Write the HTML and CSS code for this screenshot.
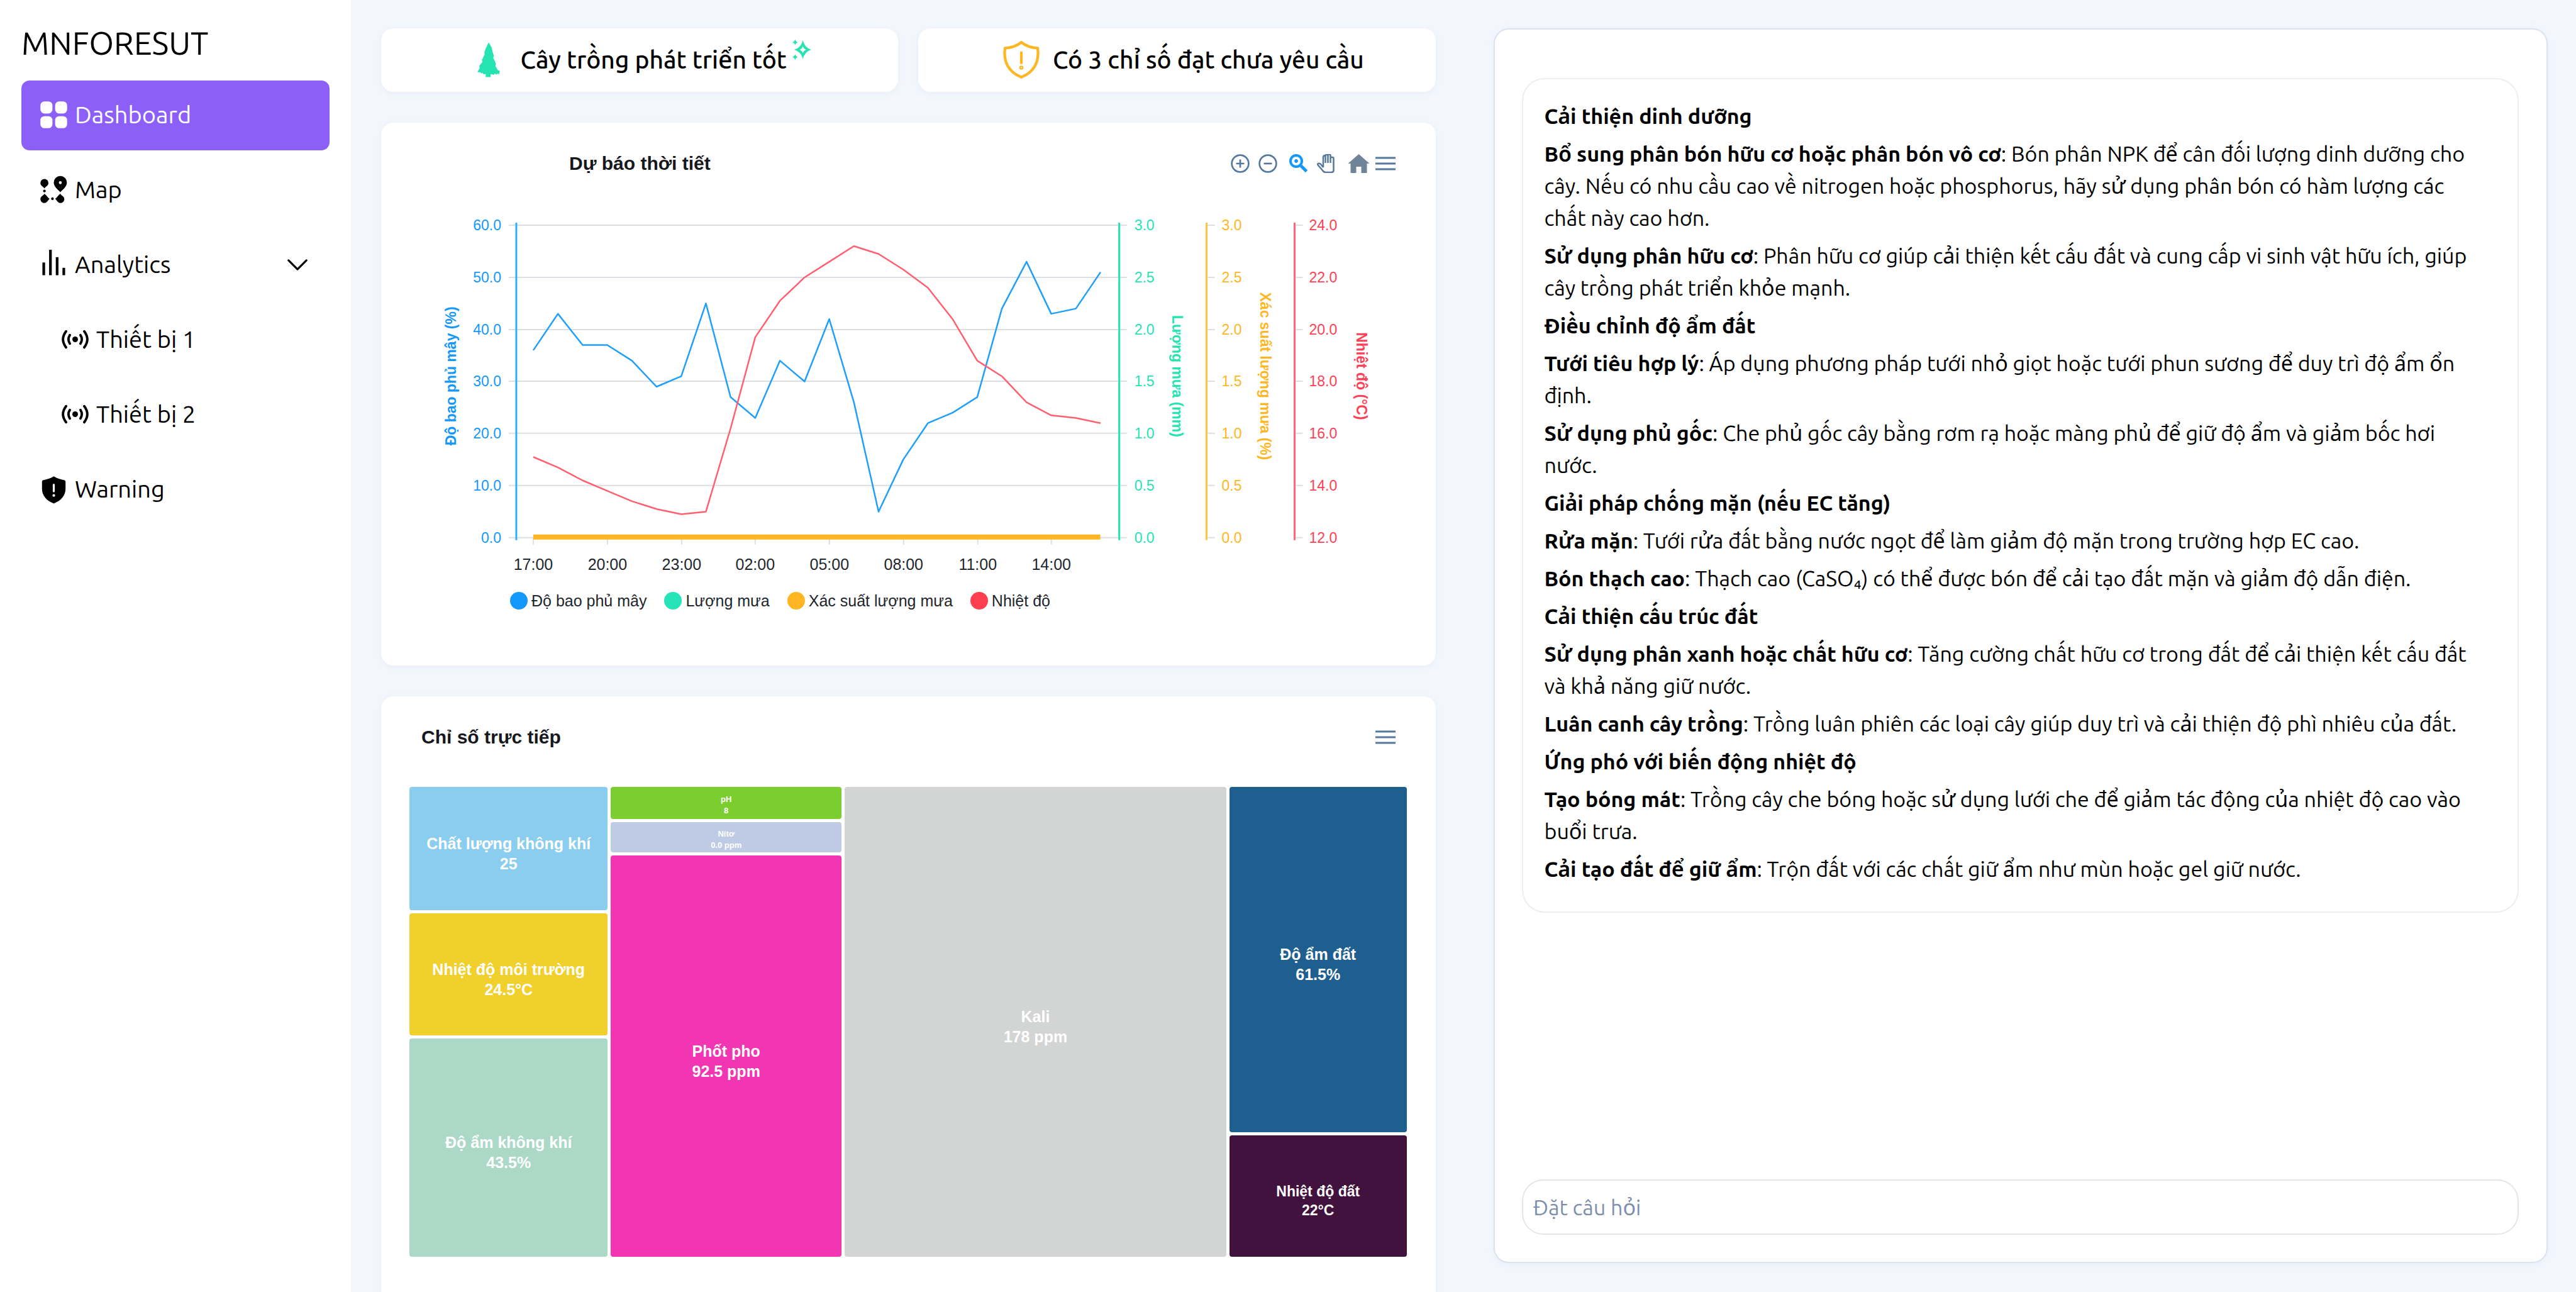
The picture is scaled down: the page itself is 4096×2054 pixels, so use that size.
FILE: index.html
```html
<!DOCTYPE html>
<html lang="vi">
<head>
<meta charset="utf-8">
<title>MNFORESUT</title>
<link rel="stylesheet" href="styles.css">
</head>
<body>
<div class="app">
  <aside class="sidebar">
    <h1 class="brand">MNFORESUT</h1>
    <nav class="nav">
      <a class="nav-item active" href="#dashboard">
        <svg class="icon" viewBox="0 0 24 24" fill="currentColor"><rect x="2" y="2" width="9" height="9" rx="3"/><rect x="13" y="2" width="9" height="9" rx="3"/><rect x="2" y="13" width="9" height="9" rx="3"/><rect x="13" y="13" width="9" height="9" rx="3"/></svg>
        Dashboard
      </a>
      <a class="nav-item" href="#map">
        <svg class="icon" viewBox="0 0 24 24" fill="currentColor">
          <path fill-rule="evenodd" d="M16.9 1.8a4.9 4.9 0 0 0-4.9 4.9c0 3.2 3 5 4.9 7.2 1.900-2.200 4.900-4 4.900-7.200a4.900 4.900 0 0 0-4.900-4.900zm0 3.900a1.100 1.100 0 1 1 0 2.200 1.100 1.100 0 0 1 0-2.200z"/>
          <path d="M5 4a3 3 0 0 0-3 3c0 2 2 2.500 3 4 1-1.500 3-2 3-4a3 3 0 0 0-3-3z"/>
          <circle cx="5" cy="13" r="1"/><circle cx="11" cy="18.800" r="1"/>
          <path d="M5 15c-1 1.600-3 2-3 4a3 3 0 0 0 3 3c2 0 2.400-2 3.900-3.200C7.400 18 7 16.500 5 15z"/>
          <path d="M16.900 15c1 1.600 3 2 3 4a3 3 0 0 1-3 3c-2 0-2.400-2-3.900-3.200 1.500-.8 1.900-2.300 3.900-3.800z"/>
        </svg>
        Map
      </a>
      <a class="nav-item" href="#analytics">
        <svg class="icon" viewBox="0 0 24 24" fill="currentColor"><rect x="3.500" y="10.500" width="2" height="9.500"/><rect x="8.500" y="1" width="2" height="19"/><rect x="13.500" y="6.500" width="2" height="13.500"/><rect x="18.500" y="14.500" width="2" height="5.500"/></svg>
        Analytics
        <svg class="chevron" viewBox="0 0 24 24" fill="none" stroke="currentColor" stroke-width="2" stroke-linecap="round" stroke-linejoin="round"><path d="M3 7.500l9 9 9-9"/></svg>
      </a>
      <a class="nav-item sub" href="#device-1">
        <svg class="icon" viewBox="0 0 24 24" fill="none" stroke="currentColor" stroke-width="1.800" stroke-linecap="round"><circle cx="12" cy="12" r="2.100" fill="currentColor" stroke="none"/><path d="M8 8.800q-2 3.200 0 6.400M16 8.800q2 3.200 0 6.400M5.200 6q-4.600 6 0 12M18.800 6q4.600 6 0 12"/></svg>
        Thiết bị 1
      </a>
      <a class="nav-item sub" href="#device-2">
        <svg class="icon" viewBox="0 0 24 24" fill="none" stroke="currentColor" stroke-width="1.800" stroke-linecap="round"><circle cx="12" cy="12" r="2.100" fill="currentColor" stroke="none"/><path d="M8 8.800q-2 3.200 0 6.400M16 8.800q2 3.200 0 6.400M5.200 6q-4.600 6 0 12M18.800 6q4.600 6 0 12"/></svg>
        Thiết bị 2
      </a>
      <a class="nav-item" href="#warning">
        <svg class="icon" viewBox="0 0 24 24"><path fill="currentColor" d="M12 2.500c2.500 1.600 5 2.300 7.800 2.800.7.200 1 .6 1 1.200v5.300c0 5-3.300 9-8.800 11-5.500-2-8.800-6-8.800-11V6.500c0-.6.300-1 1-1.200C7 4.800 9.500 4.100 12 2.500z"/><path d="M12 8.800v4.800" stroke="#fff" stroke-width="1.500" stroke-linecap="round"/><circle cx="12" cy="16.800" r="1" fill="#fff"/></svg>
        Warning
      </a>
    </nav>
  </aside>

  <main class="content">
    <div class="column">
      <div class="status-row">
        <section class="card status healthy">
          <svg class="status-icon" viewBox="-6 -4 36 42" fill="#26e4b2"><path d="M12 0l3 5 .5 3 1.600 5-.6 2 2.700 6-.6 2 2.300 4 2 1-.4 3-2-.4-.8 1-1.500-1-1.200 1.200L14 31v3h-5l.2-3-2.200.2-.8-1.400-1.400.8-.6-1.300L1 29l2.200-4-.4-2L6 19l-.6-2L8 12l-.2-2.300L9 6z"/></svg>
          <h2>Cây trồng phát triển tốt</h2>
          <svg class="sparkles" viewBox="0 0 30 30" fill="#26e4b2"><path fill-rule="evenodd" d="M16.500 1Q19 12 29 15 19 18 16.500 29 14 18 3.500 15 14 12 16.500 1zm0 8.500Q15.500 13.500 11.500 15 15.500 16.500 16.500 20.500 17.500 16.500 21.500 15 17.500 13.500 16.500 9.500z"/><path d="M5 0q1 3 4 4-3 1-4 4-1-3-4-4 3-1 4-4zM5 22q1 3 4 4-3 1-4 4-1-3-4-4 3-1 4-4z"/></svg>
        </section>
        <section class="card status">
          <svg class="status-icon" viewBox="0 0 24 24" fill="none" stroke="#ffb622" stroke-width="1.500" stroke-linejoin="round" stroke-linecap="round"><path d="M12 2.200Q8 5.400 2.800 5.400q-1.500 12 9.200 16.400Q22.700 17.400 21.200 5.400 16 5.400 12 2.200z"/><path d="M12 8v5.800"/><circle cx="12" cy="16.400" r=".4"/></svg>
          <h2>Có 3 chỉ số đạt chưa yêu cầu</h2>
        </section>
      </div>

      <section class="card forecast">
        <header class="card-head forecast-head">
          <h3>Dự báo thời tiết</h3>
          <div class="toolbar">
            <button type="button" aria-label="Phóng to"><svg class="tool" viewBox="0 0 28 28"><circle cx="14" cy="14" r="12.500"/><path d="M14 8v12M8 14h12"/></svg></button>
            <button type="button" aria-label="Thu nhỏ"><svg class="tool" viewBox="0 0 28 28"><circle cx="14" cy="14" r="12.500"/><path d="M8 14h12"/></svg></button>
            <button type="button" class="tool-gap" aria-label="Chọn vùng"><svg class="tool selected" viewBox="0 0 30 30"><circle cx="11" cy="11" r="9" stroke-width="4"/><path d="M18.500 18.500l9 9" stroke-width="5"/><path d="M11 8v6M8 11h6" stroke-width="3"/></svg></button>
            <button type="button" aria-label="Di chuyển"><svg class="tool" viewBox="0 0 30 30"><path d="M10 21V5q0-3 3.500-3V14M13.500 2q1-1.500 4-1.200V14M17.500 .8q3.500-.8 4 .8V14M21.500 5h3q2 0 2 2v19q0 3-4 3H14q-3 0-5-3l-6-7q-3-3-1-4t4 1l4 5"/></svg></button>
            <button type="button" class="tool-gap" aria-label="Đặt lại"><svg class="tool home" viewBox="0 0 34 30"><path d="M17 0l17 15h-4v15H21V20h-8v10H4V15H0z"/></svg></button>
            <button type="button" class="tool-menu" aria-label="Menu"><svg class="tool menu" viewBox="0 0 32 30"><path d="M0 6h32M0 15h32M0 24h32"/></svg></button>
          </div>
        </header>
        <svg class="plot" viewBox="0 0 1677 640">
          <g class="grid"><path d="M203 73H1186M203 156H1186M203 239H1186M203 321H1186M203 404H1186M203 487H1186M203 570H1186"/><path d="M1315 73h11M1315 156h11M1315 239h11M1315 321h11M1315 404h11M1315 487h11M1315 570h11M1455 73h11M1455 156h11M1455 239h11M1455 321h11M1455 404h11M1455 487h11M1455 570h11"/><path d="M242 570v11M360 570v11M478 570v11M595 570v11M713 570v11M831 570v11M949 570v11M1066 570v11"/></g>
          <g class="axes"><path stroke="#2bb0fb" d="M215 69V574"/><path stroke="#26e4b2" d="M1174 69V574"/><path stroke="#ffc23c" d="M1313 69V574"/><path stroke="#ff6478" d="M1453 69V574"/></g>
          <polyline class="line cloud" transform="translate(242 570) scale(39.230 -8.280)" points="0,36 1,43 2,37 3,37 4,34 5,29 6,31 7,45 8,27 9,23 10,34 11,30 12,42 13,26 14,5 15,15 16,22 17,24 18,27 19,44 20,53 21,43 22,44 23,51"/>
          <polyline class="line temp" transform="translate(242 570) scale(39.230 -41.400)" points="0,3.1 1,2.7 2,2.2 3,1.8 4,1.4 5,1.1 6,.9 7,1 8,4.2 9,7.7 10,9.1 11,10 12,10.6 13,11.2 14,10.9 15,10.3 16,9.6 17,8.4 18,6.8 19,6.2 20,5.2 21,4.7 22,4.6 23,4.4"/>
          <path d="M242 569H1144" stroke="#ffb622" stroke-width="8"/>
          <g class="ticks cloud-text end"><text x="191" y="81">60.0</text><text x="191" y="164">50.0</text><text x="191" y="247">40.0</text><text x="191" y="329">30.0</text><text x="191" y="412">20.0</text><text x="191" y="495">10.0</text><text x="191" y="578">0.0</text></g>
          <g class="ticks rain-text"><text x="1198" y="81">3.0</text><text x="1198" y="164">2.5</text><text x="1198" y="247">2.0</text><text x="1198" y="329">1.5</text><text x="1198" y="412">1.0</text><text x="1198" y="495">0.5</text><text x="1198" y="578">0.0</text></g>
          <g class="ticks prob-text"><text x="1337" y="81">3.0</text><text x="1337" y="164">2.5</text><text x="1337" y="247">2.0</text><text x="1337" y="329">1.5</text><text x="1337" y="412">1.0</text><text x="1337" y="495">0.5</text><text x="1337" y="578">0.0</text></g>
          <g class="ticks temp-text"><text x="1476" y="81">24.0</text><text x="1476" y="164">22.0</text><text x="1476" y="247">20.0</text><text x="1476" y="329">18.0</text><text x="1476" y="412">16.0</text><text x="1476" y="495">14.0</text><text x="1476" y="578">12.0</text></g>
          <g class="hours"><text x="242" y="621">17:00</text><text x="360" y="621">20:00</text><text x="478" y="621">23:00</text><text x="595" y="621">02:00</text><text x="713" y="621">05:00</text><text x="831" y="621">08:00</text><text x="949" y="621">11:00</text><text x="1066" y="621">14:00</text></g>
          <g class="axis-title">
            <text class="cloud-text" transform="translate(119 313) rotate(-90)">Độ bao phủ mây (%)</text>
            <text class="rain-text" transform="translate(1258 313) rotate(90)">Lượng mưa (mm)</text>
            <text class="prob-text" transform="translate(1398 313) rotate(90)">Xác suất lượng mưa (%)</text>
            <text class="temp-text" transform="translate(1551 313) rotate(90)">Nhiệt độ (°C)</text>
          </g>
        </svg>
        <ul class="legend">
          <li class="key-cloud">Độ bao phủ mây</li>
          <li class="key-rain">Lượng mưa</li>
          <li class="key-prob">Xác suất lượng mưa</li>
          <li class="key-temp">Nhiệt độ</li>
        </ul>
      </section>

      <section class="card live">
        <header class="card-head">
          <h3>Chỉ số trực tiếp</h3>
          <div class="toolbar"><button type="button" aria-label="Menu"><svg class="tool menu" viewBox="0 0 32 30"><path d="M0 6h32M0 15h32M0 24h32"/></svg></button></div>
        </header>
        <div class="treemap" style="grid-template-columns:316fr 367fr 608fr 282fr">
          <div class="tree-col" style="grid-template-rows:197fr 194fr 348fr">
            <div class="tile air">Chất lượng không khí<br>25</div>
            <div class="tile env">Nhiệt độ môi trường<br>24.5°C</div>
            <div class="tile humid">Độ ẩm không khí<br>43.5%</div>
          </div>
          <div class="tree-col" style="grid-template-rows:51fr 48fr 640fr">
            <div class="tile tiny ph">pH<br>8</div>
            <div class="tile tiny nitro">Nitơ<br>0.0 ppm</div>
            <div class="tile phos">Phốt pho<br>92.5 ppm</div>
          </div>
          <div class="tree-col">
            <div class="tile kali">Kali<br>178 ppm</div>
          </div>
          <div class="tree-col" style="grid-template-rows:549fr 193fr">
            <div class="tile soil">Độ ẩm đất<br>61.5%</div>
            <div class="tile small soil-temp">Nhiệt độ đất<br>22°C</div>
          </div>
        </div>
      </section>
    </div>

    <section class="assistant">
      <div class="answer">
        <p><b>Cải thiện dinh dưỡng</b></p>
        <p><b>Bổ sung phân bón hữu cơ hoặc phân bón vô cơ</b>: Bón phân NPK để cân đối lượng dinh dưỡng cho cây. Nếu có nhu cầu cao về nitrogen hoặc phosphorus, hãy sử dụng phân bón có hàm lượng các chất này cao hơn.</p>
        <p><b>Sử dụng phân hữu cơ</b>: Phân hữu cơ giúp cải thiện kết cấu đất và cung cấp vi sinh vật hữu ích, giúp cây trồng phát triển khỏe mạnh.</p>
        <p><b>Điều chỉnh độ ẩm đất</b></p>
        <p><b>Tưới tiêu hợp lý</b>: Áp dụng phương pháp tưới nhỏ giọt hoặc tưới phun sương để duy trì độ ẩm ổn định.</p>
        <p><b>Sử dụng phủ gốc</b>: Che phủ gốc cây bằng rơm rạ hoặc màng phủ để giữ độ ẩm và giảm bốc hơi nước.</p>
        <p><b>Giải pháp chống mặn (nếu EC tăng)</b></p>
        <p><b>Rửa mặn</b>: Tưới rửa đất bằng nước ngọt để làm giảm độ mặn trong trường hợp EC cao.</p>
        <p><b>Bón thạch cao</b>: Thạch cao (CaSO₄) có thể được bón để cải tạo đất mặn và giảm độ dẫn điện.</p>
        <p><b>Cải thiện cấu trúc đất</b></p>
        <p><b>Sử dụng phân xanh hoặc chất hữu cơ</b>: Tăng cường chất hữu cơ trong đất để cải thiện kết cấu đất và khả năng giữ nước.</p>
        <p><b>Luân canh cây trồng</b>: Trồng luân phiên các loại cây giúp duy trì và cải thiện độ phì nhiêu của đất.</p>
        <p><b>Ứng phó với biến động nhiệt độ</b></p>
        <p><b>Tạo bóng mát</b>: Trồng cây che bóng hoặc sử dụng lưới che để giảm tác động của nhiệt độ cao vào buổi trưa.</p>
        <p><b>Cải tạo đất để giữ ẩm</b>: Trộn đất với các chất giữ ẩm như mùn hoặc gel giữ nước.</p>
      </div>
      <input class="question" type="text" placeholder="Đặt câu hỏi" aria-label="Đặt câu hỏi">
    </section>
  </main>
</div>
</body>
</html>
```

FILE: styles.css
```css
* { box-sizing: border-box; }

html, body { height: 100%; margin: 0; overflow: hidden; }

body {
  font: 400 34px/51px "Ubuntu", "Noto Sans", sans-serif;
  color: #000;
  background: #f3f7fd;
}

h1, h2, h3, p, ul { margin: 0; padding: 0; }

button { padding: 0; border: 0; background: none; display: flex; cursor: pointer; }

.app { display: flex; height: 100%; }

/* Sidebar */
.sidebar {
  flex: none;
  width: 558px;
  padding: 36px 34px;
  background: #fff;
}

.brand { font-size: 51px; line-height: 64px; font-weight: 400; }

.nav { display: flex; flex-direction: column; gap: 8px; margin-top: 28px; }

.nav-item {
  display: flex;
  align-items: center;
  gap: 8px;
  height: 111px;
  padding: 0 32px 2px 26px;
  border-radius: 13px;
  font-size: 38px;
  color: #000;
  text-decoration: none;
}

.nav-item.active { background: #8b5ff8; color: #fff; }
.nav-item.sub { padding-left: 60px; }
.icon { width: 51px; height: 51px; flex: none; }
.chevron { width: 38px; height: 38px; margin-left: auto; }

/* Content */
.content {
  flex: 1;
  display: grid;
  grid-template-columns: 1fr 1fr;
  grid-template-rows: minmax(0, 1fr);
  gap: 92px;
  height: 100%;
  padding: 45px 45px 46px 48px;
}

.column { display: flex; flex-direction: column; gap: 49px; min-width: 0; }

.card {
  flex: none;
  background: #fff;
  border-radius: 20px;
  box-shadow: 0 2px 12px rgba(90, 120, 170, .07);
}

.status-row { display: grid; grid-template-columns: 1fr 1fr; gap: 32px; }

.status {
  display: flex;
  align-items: center;
  justify-content: center;
  gap: 16px;
  height: 101px;
  padding: 0 0 2px 16px;
}

.status.healthy { padding-left: 0; }
.status h2 { font-size: 39px; line-height: 51px; font-weight: 500; }
.status-icon { width: 68px; height: 68px; }
.sparkles { width: 32px; height: 32px; align-self: flex-start; margin: 18px 0 0 -8px; }

.card-head {
  display: flex;
  align-items: center;
  justify-content: space-between;
  height: 90px;
  padding: 40px 64px 0 64px;
}

.card-head.forecast-head { padding-left: 299px; }

.card-head h3 { font: bold 30px/40px "Liberation Sans", sans-serif; color: #16181d; }

.toolbar { display: flex; align-items: center; gap: 14px; }
.tool { width: 30px; height: 30px; fill: none; stroke: #55789c; stroke-width: 2.500; }
.tool.selected { stroke: #1498fc; }
.tool.menu { width: 32px; stroke-width: 3; }
.tool.home { width: 35px; fill: #6f8499; stroke: none; }
.tool-gap { margin-left: 5px; }
.tool-menu { margin-left: -5px; }

/* Forecast chart */
.plot { display: block; width: 100%; font-family: "Liberation Sans", sans-serif; }
.grid { stroke: #dcdfe3; stroke-width: 2; }
.axes { stroke-width: 3; }
.line { fill: none; stroke-width: 2.500; vector-effect: non-scaling-stroke; stroke-linejoin: round; }
.cloud { stroke: #1f9ffb; }
.temp { stroke: #ff5f6e; }
.ticks { font-size: 23px; }
.end { text-anchor: end; }
.hours { font-size: 25px; text-anchor: middle; fill: #22262d; }
.axis-title { font-size: 23px; font-weight: bold; text-anchor: middle; }
.cloud-text { fill: #1498fc; }
.rain-text { fill: #26e4b2; }
.prob-text { fill: #ffb622; }
.temp-text { fill: #ff3f55; }

.legend {
  display: flex;
  gap: 28px;
  height: 133px;
  padding: 10px 0 0 205px;
  list-style: none;
  font: 25px/40px "Liberation Sans", sans-serif;
  color: #22262d;
}

.legend li { display: flex; gap: 6px; height: 40px; align-items: center; }
.legend li::before { content: ""; width: 28px; height: 28px; border-radius: 50%; background: currentColor; }
.legend .key-cloud::before { background: #1498fc; }
.legend .key-rain::before { background: #26e4b7; }
.legend .key-prob::before { background: #ffb622; }
.legend .key-temp::before { background: #ff3f50; }

/* Treemap */
.live { padding-bottom: 100px; }

.treemap { display: grid; gap: 5px; height: 747px; margin: 54px 46px 0 45px; }
.tree-col { display: grid; gap: 5px; min-width: 0; }

.tile {
  display: grid;
  align-content: center;
  justify-items: center;
  padding-top: 16px;
  border-radius: 4px;
  font: bold 25px/32px "Liberation Sans", sans-serif;
  text-align: center;
  color: #fff;
}

.tile.small { font-size: 23px; line-height: 30px; }
.tile.tiny { padding-top: 8px; font-size: 13px; line-height: 18px; }

.air { background: #8acdee; }
.env { background: #f1cf2c; }
.humid { background: #acd8c8; }
.ph { background: #7cce30; }
.nitro { background: #bfcbe4; }
.phos { background: #f236b3; }
.kali { background: #d3d4d4; }
.soil { background: #1f5f90; }
.soil-temp { background: #41123e; }

/* Assistant */
.assistant {
  display: flex;
  flex-direction: column;
  justify-content: space-between;
  min-width: 0;
  padding: 77px 44px 43px 43px;
  background: #fff;
  border: 2px solid #dbe3ee;
  border-radius: 24px;
  box-shadow: 0 2px 12px rgba(90, 120, 170, .07);
}

.answer {
  display: flex;
  flex-direction: column;
  gap: 9px;
  padding: 33px 44px 42px 34px;
  border: 2px solid #eceef1;
  border-radius: 36px;
}

.answer b { font-weight: 600; }

.question {
  width: 100%;
  height: 88px;
  padding: 0 16px;
  border: 2px solid #e4e6ea;
  border-radius: 34px;
  background: #fff;
  font: inherit;
  color: #000;
}

.question::placeholder { color: #7d8fab; opacity: 1; }
```
